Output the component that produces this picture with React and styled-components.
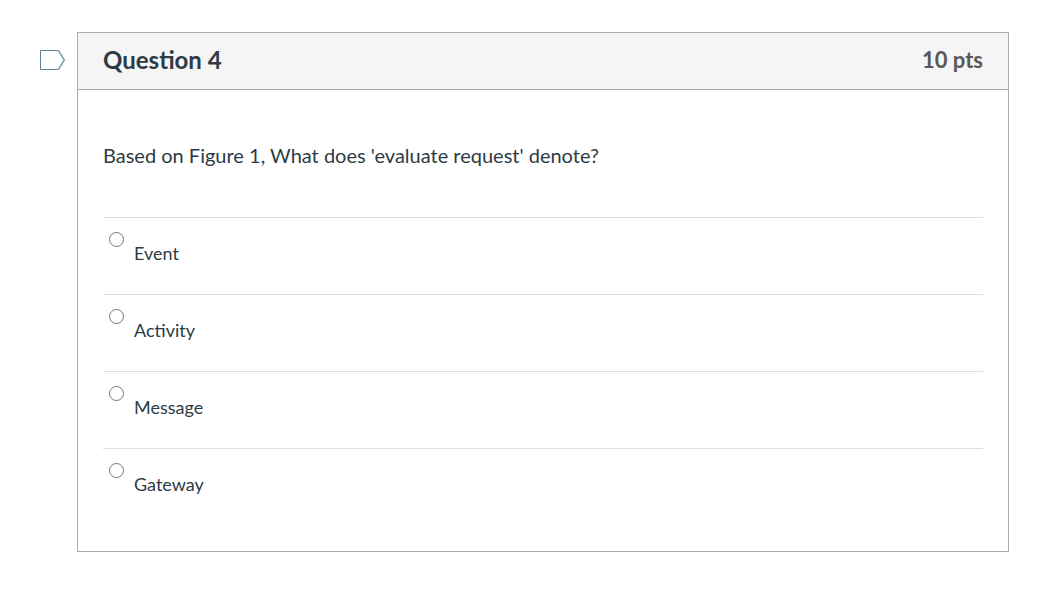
import React from 'react'
import styled, { createGlobalStyle } from 'styled-components'

const answers = ['Event', 'Activity', 'Message', 'Gateway']

const App = () => {
    return (
        <>
            <GlobalStyle />
            <Page>
                <FlagButton type="button" aria-label="Flag question">
                    <svg width="27" height="22" viewBox="0 0 27 22" fill="none">
                        <path d="M19.5 1.5L25.3 11L19.5 20.5" stroke="#7fa0b5" strokeWidth="1.5" />
                        <path d="M19.5 1.5H1.5V20.5H19.5" stroke="#5f8299" strokeWidth="1" />
                    </svg>
                </FlagButton>
                <Question>
                    <Header>
                        <Title>Question 4</Title>
                        <Points>10 pts</Points>
                    </Header>
                    <Body>
                        <Prompt id="prompt">Based on Figure 1, What does 'evaluate request' denote?</Prompt>
                        <div role="radiogroup" aria-labelledby="prompt">
                            {answers.map((answer) => (
                                <Answer key={answer}>
                                    <Radio type="radio" name="question-4" value={answer} />
                                    <AnswerText>{answer}</AnswerText>
                                </Answer>
                            ))}
                        </div>
                    </Body>
                </Question>
            </Page>
        </>
    )
}

const GlobalStyle = createGlobalStyle`
    *
    {
        box-sizing: border-box;
    }

    body
    {
        margin: 0;
        background-color: #fff;
        color: #2d3b45;
        font-family: Lato, "Liberation Sans", sans-serif;
    }
`

const Page = styled.main`
    display: flex;
    align-items: flex-start;
    gap: 11px;
    padding: 32px 33px 37px 39px;
`

const FlagButton = styled.button`
    display: flex;
    margin-top: 17px;
    padding: 0;
    border: 0;
    background: none;
    cursor: pointer;
`

const Question = styled.section`
    flex: 1;
    border: 1px solid #aaa;
`

const Header = styled.header`
    display: flex;
    justify-content: space-between;
    align-items: center;
    padding: 12px 25px 14px;
    border-bottom: 1px solid #aaa;
    background-color: #f5f5f5;
    line-height: 30px;
`

const Title = styled.h2`
    margin: 0;
    font-size: 24px;
    font-weight: 700;
`

const Points = styled.span`
    color: #595959;
    font-size: 22px;
    font-weight: 700;
`

const Body = styled.div`
    padding: 50px 25px 26px;
`

const Prompt = styled.p`
    margin: 0 0 47px;
    font-size: 20px;
    line-height: 30px;
`

const Answer = styled.label`
    display: flex;
    align-items: flex-start;
    gap: 10px;
    min-height: 77px;
    padding: 14px 6px;
    border-top: 1px solid #ddd;
    cursor: pointer;
`

const Radio = styled.input`
    width: 15px;
    height: 15px;
    margin: 0;
`

const AnswerText = styled.span`
    padding-top: 8px;
    font-size: 18px;
    line-height: 26px;
`

export default App
